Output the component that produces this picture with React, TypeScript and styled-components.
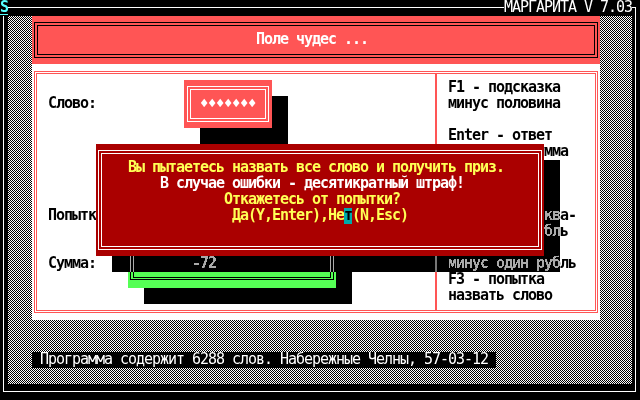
import React from 'react';
import styled, { createGlobalStyle, css } from 'styled-components';

const C = {
  black: '#000000',
  white: '#FFFFFF',
  lred: '#FF5555',
  dred: '#AA0000',
  lgreen: '#55FF55',
  yellow: '#FFFF55',
  lcyan: '#55FFFF',
  cyan: '#00AAAA',
};

const GlobalStyle = createGlobalStyle`
  html, body { margin: 0; padding: 0; background: #000; }
  body { width: 640px; height: 400px; overflow: hidden; }
`;

type Place = { $c: number; $r: number; $w?: number; $h?: number; $z?: number };

const place = css<Place>`
  grid-column: ${(p) => p.$c} / span ${(p) => p.$w ?? 1};
  grid-row: ${(p) => p.$r} / span ${(p) => p.$h ?? 1};
  position: relative;
  z-index: ${(p) => p.$z ?? 0};
`;

/* whole 80x25 text-mode screen */
const Screen = styled.div`
  display: grid;
  grid-template-columns: repeat(80, 8px);
  grid-template-rows: repeat(25, 16px);
  width: 640px;
  height: 400px;
  background: #000;
  color: #fff;
  font-family: "DejaVu Sans Mono", "Liberation Mono", monospace;
  font-size: 15px;
  font-weight: bold;
  letter-spacing: -1.03px;
  line-height: 14px;
  white-space: pre;
  overflow: hidden;
`;

const OuterLine = styled.div`
  grid-area: 1 / 1 / -1 / -1;
  margin: 7px 4px 8px 3px;
  border: 1px solid #fff;
`;

const SysCursor = styled.div<Place>`
  ${place};
  color: ${C.lcyan};
  background: linear-gradient(#000 0 14px, ${C.lcyan} 14px 15px, #000 15px);
`;

const TopTitle = styled.div<Place>`
  ${place};
  background: #000;
  color: #fff;
  font-weight: normal;
`;

const Desktop = styled.div<Place>`
  ${place};
  display: grid;
  grid-template-columns: repeat(78, 8px);
  grid-template-rows: repeat(23, 16px);
  background-color: #000;
  background-image: conic-gradient(#fff 25%, #000 0 50%, #fff 0 75%, #000 0);
  background-size: 2px 2px;
`;

const Panel = styled.div<Place & { $bg: string; $fg: string }>`
  ${place};
  display: grid;
  grid-template-columns: repeat(${(p) => p.$w ?? 1}, 8px);
  grid-template-rows: repeat(${(p) => p.$h ?? 1}, 16px);
  background: ${(p) => p.$bg};
  color: ${(p) => p.$fg};
`;

const TitlePanel = styled(Panel)``;
const InfoPanel = styled(Panel)``;
const FieldBox = styled(Panel)``;
const Dialog = styled(Panel)``;

const FrameOuter = styled.div<{ $line: string; $mx: number; $my: number }>`
  grid-area: 1 / 1 / -1 / -1;
  display: flex;
  margin: ${(p) => p.$my}px ${(p) => p.$mx}px;
  border: 1px solid ${(p) => p.$line};
`;

const FrameInner = styled.div<{ $line: string; $gx: number; $gy: number }>`
  flex: 1;
  margin: ${(p) => p.$gy}px ${(p) => p.$gx}px;
  border: 1px solid ${(p) => p.$line};
`;

function DoubleFrame({
  line,
  mx = 2,
  my = 6,
  gx = 2,
  gy = 2,
}: {
  line: string;
  mx?: number;
  my?: number;
  gx?: number;
  gy?: number;
}) {
  return (
    <FrameOuter $line={line} $mx={mx} $my={my}>
      <FrameInner $line={line} $gx={gx} $gy={gy} />
    </FrameOuter>
  );
}

const Text = styled.div<Place & { $color?: string }>`
  ${place};
  ${(p) => (p.$color ? `color: ${p.$color};` : '')}
`;

const Divider = styled.div<{ $c: number }>`
  grid-column: ${(p) => p.$c};
  grid-row: 1 / -1;
  margin: 9px 0;
  background: linear-gradient(90deg, transparent 3px, ${C.lred} 3px 5px, transparent 5px);
`;

const DropShadow = styled.div<Place & { $see?: boolean }>`
  ${place};
  background: ${(p) => (p.$see ? 'transparent' : '#000')};
  ${(p) =>
    p.$see
      ? css`
          backdrop-filter: grayscale(1) invert(1) contrast(8) brightness(0.667);
        `
      : ''}
`;

const Mask = styled.div<Place>`
  ${place};
  display: flex;
  color: #fff;
`;

const Glyph = styled.span`
  width: 8px;
  text-align: center;
  letter-spacing: 0;
  font-size: 14px;
  line-height: 15px;
`;

const HelpColumn = styled.div<Place>`
  ${place};
  display: flex;
  flex-direction: column;
`;

const HelpLine = styled.div`
  height: 16px;
`;

const Cursor = styled.span`
  display: inline-block;
  width: 8px;
  height: 16px;
  vertical-align: top;
  background: ${C.cyan};
  color: #000;
`;

const StatusLine = styled.div<Place>`
  ${place};
  background: #000;
  color: #fff;
  font-weight: normal;
  padding-left: 8px;
`;

const help = [
  'F1 - подсказка',
  'минус половина',
  '',
  'Enter - ответ',
  'плюсуется сумма',
  '',
  '',
  '',
  'F2 - одна буква-',
  'плюс один рубль',
  '',
  'минус один рубль',
  'F3 - попытка',
  'назвать слово',
];

export default function App() {
  return (
    <>
      <GlobalStyle />
      <Screen>
        <OuterLine />
        <SysCursor $c={1} $r={1}>S</SysCursor>
        <TopTitle $c={64} $r={1} $w={16}>МАРГАРИТА V 7.03</TopTitle>
        <Desktop $c={2} $r={2} $w={78} $h={23}>
          <TitlePanel $c={4} $r={1} $w={71} $h={3} $bg={C.lred} $fg={C.white}>
            <DoubleFrame line="#000" />
            <Text $c={29} $r={2} $w={14}>Поле чудес ...</Text>
          </TitlePanel>

          <InfoPanel $c={4} $r={4} $w={71} $h={16} $bg={C.white} $fg={C.black}>
            <DoubleFrame line={C.lred} my={7} gy={1} gx={1} />
            <Divider $c={51} />
            <Text $c={3} $r={3} $w={6}>Слово:</Text>
            <Text $c={3} $r={10} $w={8}>Попытка:</Text>
            <Text $c={3} $r={13} $w={6}>Сумма:</Text>

            <DropShadow $c={22} $r={3} $w={11} $h={3} $z={1} />
            <FieldBox $c={20} $r={2} $w={11} $h={3} $z={2} $bg={C.lred} $fg={C.white}>
              <DoubleFrame line="#fff" mx={3} />
              <Mask $c={3} $r={2} $w={7}>
                {Array.from({ length: 7 }).map((_, i) => (
                  <Glyph key={i}>♦</Glyph>
                ))}
              </Mask>
            </FieldBox>

            <DropShadow $c={15} $r={14} $w={26} $h={2} $z={1} />
            <FieldBox $c={13} $r={12} $w={26} $h={3} $z={2} $bg={C.lgreen} $fg={C.black}>
              <DoubleFrame line="#000" my={8} gy={1} />
              <Text $c={9} $r={2} $w={3}>-72</Text>
            </FieldBox>

            <HelpColumn $c={53} $r={2} $w={18} $h={14}>
              {help.map((t, i) => (
                <HelpLine key={i}>{t}</HelpLine>
              ))}
            </HelpColumn>
          </InfoPanel>

          <StatusLine $c={4} $r={22} $w={58}>
            Программа содержит 6288 слов. Набережные Челны, 57-03-12
          </StatusLine>

          <DropShadow $c={14} $r={10} $w={56} $h={7} $z={5} $see />
          <Dialog $c={12} $r={9} $w={56} $h={7} $z={6} $bg={C.dred} $fg={C.yellow}>
            <DoubleFrame line="#fff" />
            <Text $c={5} $r={2} $w={47}>Вы пытаетесь назвать все слово и получить приз.</Text>
            <Text $c={9} $r={3} $w={38} $color="#fff">
              В случае ошибки - десятикратный штраф!
            </Text>
            <Text $c={17} $r={4} $w={22}>Откажетесь от попытки?</Text>
            <Text $c={18} $r={5} $w={22}>
              Да(Y,Enter),Не<Cursor>т</Cursor>(N,Esc)
            </Text>
          </Dialog>
        </Desktop>
      </Screen>
    </>
  );
}
